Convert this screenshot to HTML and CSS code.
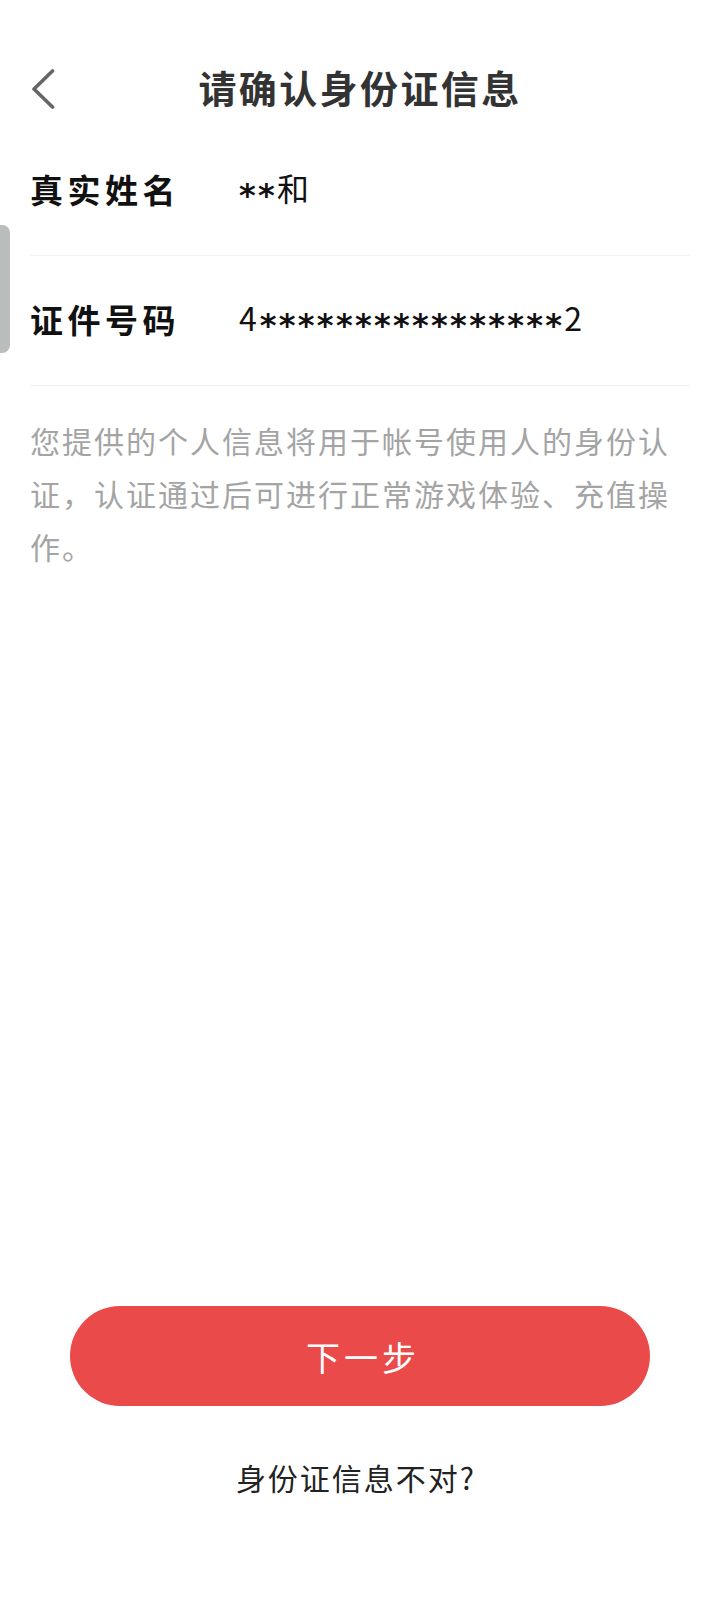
FILE: index.html
```html
<!DOCTYPE html>
<html lang="zh-CN">
<head>
  <meta charset="UTF-8">
  <meta name="viewport" content="width=device-width, initial-scale=1.0">
  <title>请确认身份证信息</title>
  <link rel="stylesheet" href="styles.css">
</head>
<body>
  <div class="side-handle"></div>
  <div class="page">
    <header class="nav">
      <button class="back-btn" aria-label="返回">
        <svg width="24" height="40" viewBox="0 0 24 40"><path d="M21.5 2 L3 20 L21.5 38" fill="none" stroke="#666" stroke-width="3.6" stroke-linecap="round" stroke-linejoin="round"/></svg>
      </button>
      <h1 class="nav-title">请确认身份证信息</h1>
    </header>
    <div class="info-row">
      <span class="info-label">真实姓名</span>
      <span class="info-value"><span class="mask">**</span>和</span>
    </div>
    <div class="info-row">
      <span class="info-label">证件号码</span>
      <span class="info-value">4<span class="mask">****************</span>2</span>
    </div>
    <p class="notice">您提供的个人信息将用于帐号使用人的身份认证，认证通过后可进行正常游戏体验、充值操作。</p>
    <div class="actions">
      <button class="next-btn">下一步</button>
      <a class="wrong-link">身份证信息不对?</a>
    </div>
  </div>
</body>
</html>
```

FILE: styles.css
```css
* {
  box-sizing: border-box;
}

body {
  margin: 0;
  background: #fff;
  font-family: "Noto Sans CJK SC", "Noto Sans", sans-serif;
  color: #111;
}

.page {
  height: 1600px;
  padding: 0 30px;
  display: flex;
  flex-direction: column;
}

.side-handle {
  position: absolute;
  left: 0;
  top: 225px;
  width: 10px;
  height: 128px;
  background: #b9bdbb;
  border-radius: 0 8px 8px 0;
}

.nav {
  height: 126px;
  padding-top: 51px;
  position: relative;
  text-align: center;
}

.back-btn {
  position: absolute;
  left: 1px;
  top: 69px;
  padding: 0;
  border: none;
  background: none;
  line-height: 0;
}

.nav-title {
  margin: 0;
  font-size: 38px;
  line-height: 72px;
  font-weight: 700;
  letter-spacing: 2.4px;
  color: #333;
}

.info-row {
  height: 130px;
  display: flex;
  align-items: center;
  padding-bottom: 3px;
  border-bottom: 1px solid #f3f3f3;
}

.info-label {
  width: 209px;
  font-size: 33px;
  font-weight: 700;
  letter-spacing: 4.5px;
  color: #111;
}

.info-value {
  font-size: 32px;
  letter-spacing: 3px;
  color: #111;
}

.mask {
  font-family: "DejaVu Sans", sans-serif;
  font-size: 32px;
  font-weight: 700;
  letter-spacing: 2.3px;
  vertical-align: -5px;
}

.notice {
  margin: 28px 0 0;
  font-size: 30px;
  line-height: 53px;
  letter-spacing: 2px;
  color: #a4a4a4;
}

.actions {
  margin-top: auto;
  padding-bottom: 103px;
  display: flex;
  flex-direction: column;
  align-items: center;
  gap: 51px;
}

.next-btn {
  width: 580px;
  height: 100px;
  padding: 0 0 0 6px;
  border: none;
  border-radius: 50px;
  background: #eb4a4a;
  color: #fff;
  font-family: inherit;
  font-size: 34px;
  letter-spacing: 4px;
}

.wrong-link {
  padding-right: 8px;
  font-size: 30px;
  line-height: 40px;
  letter-spacing: 2px;
  color: #222;
}
```
